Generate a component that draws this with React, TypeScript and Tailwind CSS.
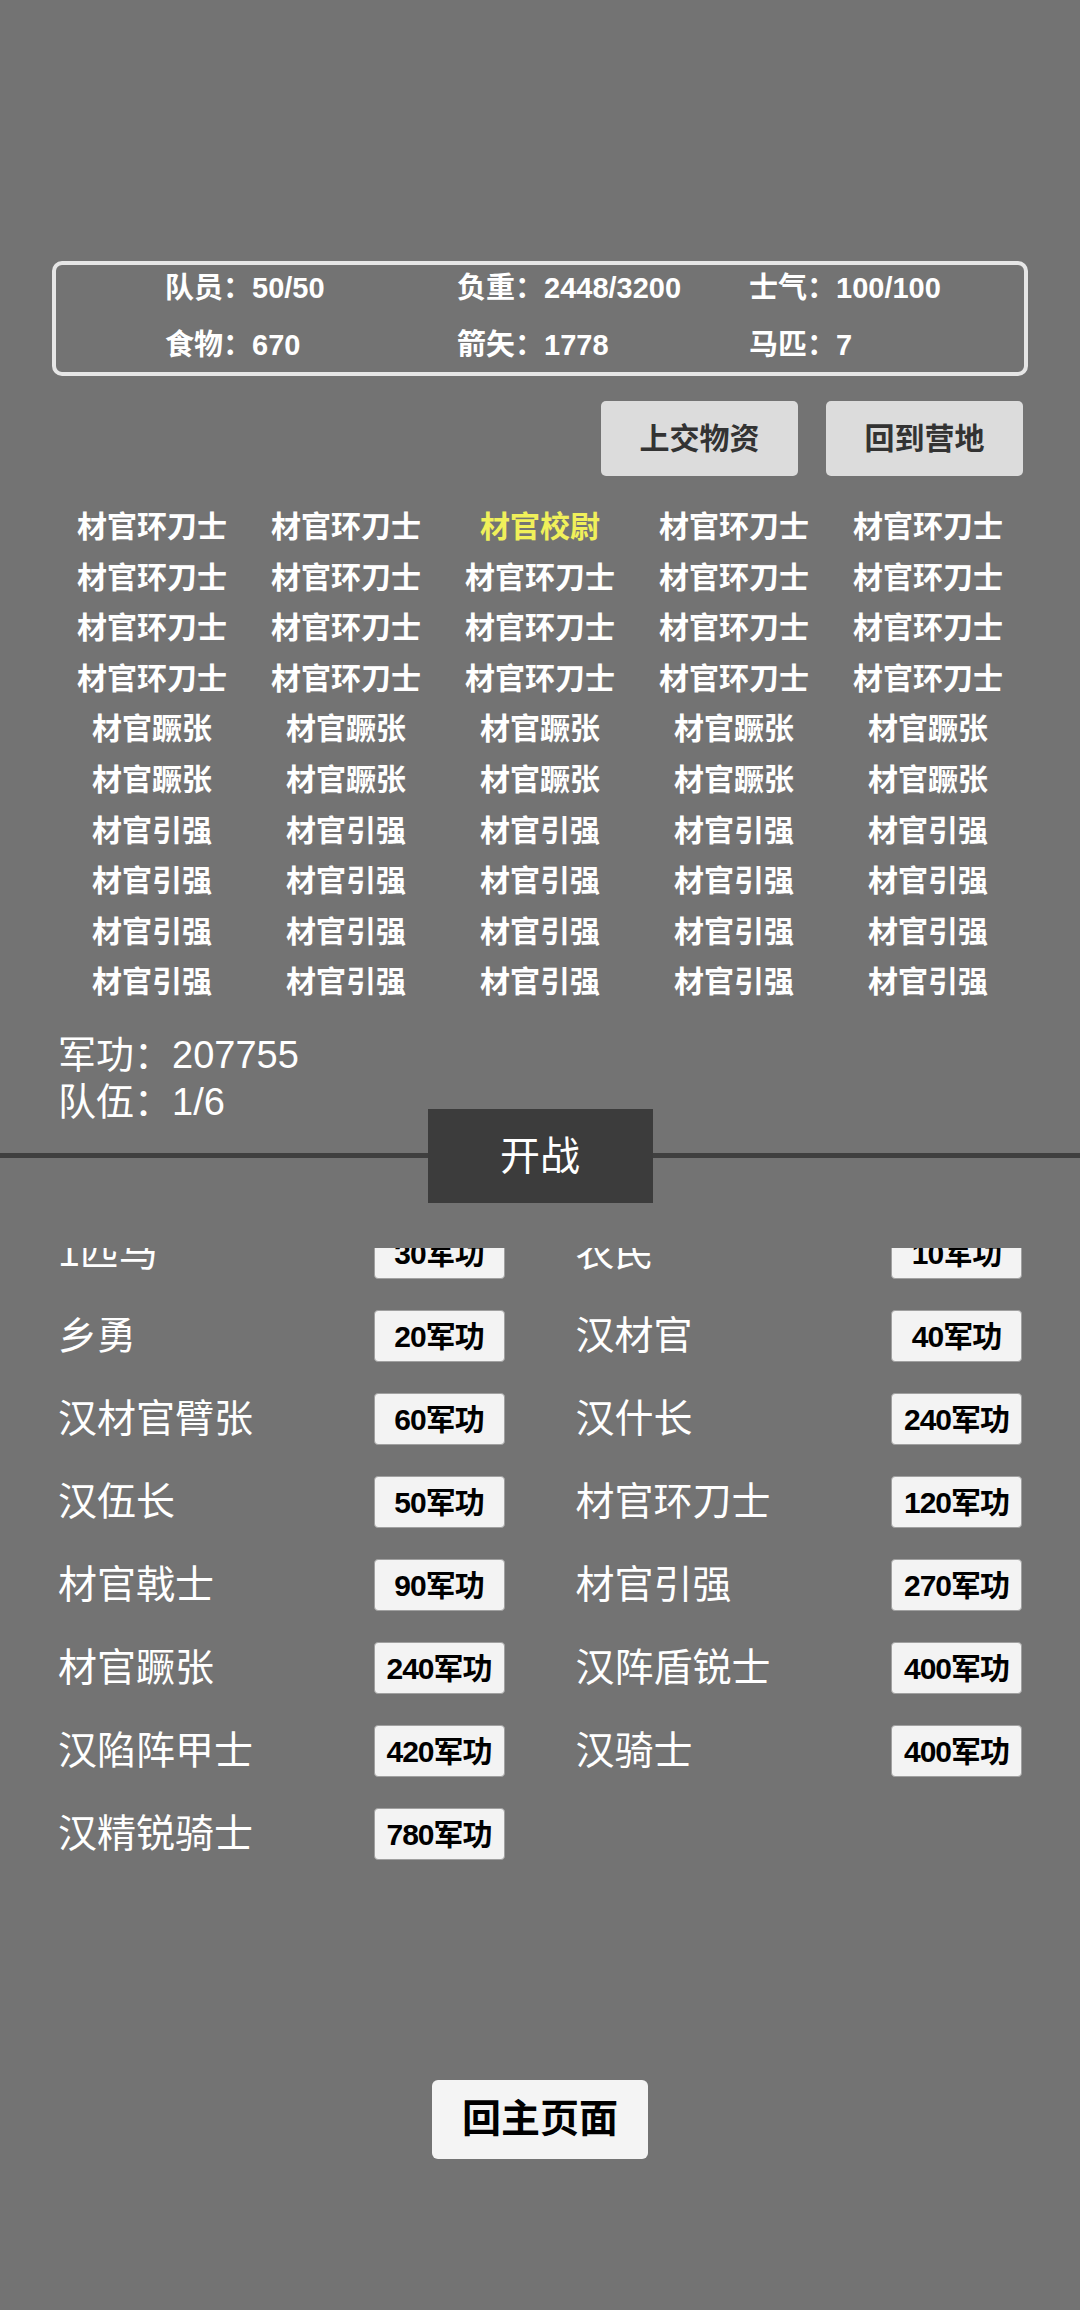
const stats = [
  ['队员：50/50', '负重：2448/3200', '士气：100/100'],
  ['食物：670', '箭矢：1778', '马匹：7'],
];

const rows = [
  ...Array(4).fill('材官环刀士'),
  ...Array(2).fill('材官蹶张'),
  ...Array(4).fill('材官引强'),
];

const units: [string, string][] = [
  ['1匹马', '30军功'],
  ['农民', '10军功'],
  ['乡勇', '20军功'],
  ['汉材官', '40军功'],
  ['汉材官臂张', '60军功'],
  ['汉什长', '240军功'],
  ['汉伍长', '50军功'],
  ['材官环刀士', '120军功'],
  ['材官戟士', '90军功'],
  ['材官引强', '270军功'],
  ['材官蹶张', '240军功'],
  ['汉阵盾锐士', '400军功'],
  ['汉陷阵甲士', '420军功'],
  ['汉骑士', '400军功'],
  ['汉精锐骑士', '780军功'],
];

const font = { fontFamily: '"Liberation Sans", "Noto Sans CJK SC", sans-serif' };

export default function App() {
  return (
    <div className="w-[1080px] h-[2310px] bg-[#737373] text-white overflow-hidden" style={font}>
      <div className="pt-[261px]">
        {/* 状态面板 */}
        <div className="mx-[52px] h-[115px] border-4 border-[#e6e6e6] rounded-[10px] pl-[109px] flex flex-col gap-[11px]">
          {stats.map((r, i) => (
            <div key={i} className="grid grid-cols-[292px_292px_1fr] text-[29px] leading-[46px] font-semibold">
              {r.map((s) => (
                <div key={s} className="whitespace-nowrap">{s}</div>
              ))}
            </div>
          ))}
        </div>

        <div className="flex justify-end gap-[28px] mr-[57px] mt-[25px]">
          <button className="w-[197px] h-[75px] bg-[#dcdcdc] rounded-[5px] text-[30px] font-bold text-[#333]">上交物资</button>
          <button className="w-[197px] h-[75px] bg-[#dcdcdc] rounded-[5px] text-[30px] font-bold text-[#333]">回到营地</button>
        </div>

        {/* 队员列表 */}
        <div className="mx-[55px] mt-[26px] grid grid-cols-5 text-center text-[30px] leading-[50.6px] font-bold">
          {rows.flatMap((name, r) =>
            Array.from({ length: 5 }).map((_, c) => {
              const hl = r === 0 && c === 2;
              return (
                <div key={`${r}-${c}`} className={hl ? 'text-[#f0f05a]' : 'text-white'}>
                  {hl ? '材官校尉' : name}
                </div>
              );
            })
          )}
        </div>

        <div className="ml-[58px] mt-[24px] text-[38px] leading-[47px]">
          <div>军功：207755</div>
          <div>队伍：1/6</div>
        </div>

        <div className="flex items-center -mt-[17px]">
          <div className="flex-1 h-[5px] bg-[#3f3f3f]" />
          <button className="w-[225px] h-[94px] bg-[#3c3c3c] text-white text-[40px]">开战</button>
          <div className="flex-1 h-[5px] bg-[#3f3f3f]" />
        </div>

        {/* 招募列表 */}
        <div className="mt-[45px] h-[800px] overflow-hidden px-[58px]">
          <div className="-mt-[36px] grid grid-cols-2 gap-x-[71px]">
            {units.map(([name, cost]) => (
              <div key={name + cost} className="h-[83px] flex items-center justify-between">
                <span className="text-[39px] whitespace-nowrap">{name}</span>
                <button className="w-[131px] h-[52px] bg-[#f3f3f3] border border-[#a0a0a0] rounded-[4px] text-[30px] font-bold text-black tracking-[-1px]">
                  {cost}
                </button>
              </div>
            ))}
          </div>
        </div>

        <div className="flex justify-center mt-[32px]">
          <button className="w-[216px] h-[79px] bg-[#f4f4f4] rounded-[6px] text-[39px] font-bold text-black">回主页面</button>
        </div>
      </div>
    </div>
  );
}
